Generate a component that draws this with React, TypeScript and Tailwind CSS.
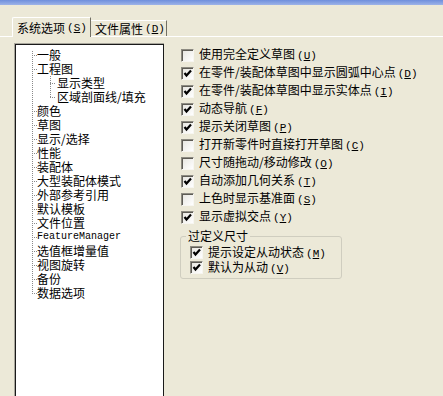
import React from 'react'

const treeItems: [string, number][] = [
    ['一般', 0],
    ['工程图', 0],
    ['显示类型', 1],
    ['区域剖面线/填充', 1],
    ['颜色', 0],
    ['草图', 0],
    ['显示/选择', 0],
    ['性能', 0],
    ['装配体', 0],
    ['大型装配体模式', 0],
    ['外部参考引用', 0],
    ['默认模板', 0],
    ['文件位置', 0],
    ['FeatureManager', 0],
    ['选值框增量值', 0],
    ['视图旋转', 0],
    ['备份', 0],
    ['数据选项', 0],
]

const options: [string, string, boolean][] = [
    ['使用完全定义草图', 'U', false],
    ['在零件/装配体草图中显示圆弧中心点', 'D', true],
    ['在零件/装配体草图中显示实体点', 'I', true],
    ['动态导航', 'F', true],
    ['提示关闭草图', 'P', true],
    ['打开新零件时直接打开草图', 'C', false],
    ['尺寸随拖动/移动修改', 'O', false],
    ['自动添加几何关系', 'T', true],
    ['上色时显示基准面', 'S', false],
    ['显示虚拟交点', 'Y', true],
]

const overDefined: [string, string, boolean][] = [
    ['提示设定从动状态', 'M', true],
    ['默认为从动', 'V', true],
]

function Key({ k }: { k: string }) {
    return (
        <span className="ml-[2px] font-['Liberation_Mono',monospace] text-[11px]">
            (<span className="underline">{k}</span>)
        </span>
    )
}

function CheckBox({ checked }: { checked: boolean }) {
    return (
        <span className="flex h-[13px] w-[13px] shrink-0 items-center justify-center border border-t-[#8d8b82] border-l-[#8d8b82] border-b-[#f7f6f1] border-r-[#f7f6f1] bg-gradient-to-br from-[#e6e5df] to-white shadow-[inset_1px_1px_0_#5e5c55]">
            {checked && (
                <svg width="9" height="9" viewBox="0 0 9 9">
                    <polyline points="1.5,4 3.5,6.5 8,1.5" fill="none" stroke="#000" strokeWidth="2.2" />
                </svg>
            )}
        </span>
    )
}

function OptionRow({ label, k, checked, h }: { label: string; k: string; checked: boolean; h: string }) {
    return (
        <div className={`flex items-center ${h}`}>
            <CheckBox checked={checked} />
            <span className="ml-[5px] whitespace-nowrap">
                {label}
                <Key k={k} />
            </span>
        </div>
    )
}

function TreeLines() {
    const dots: React.ReactNode[] = []
    const cy = (i: number) => 10 + 14 * i
    // root vertical
    for (let y = cy(0) - 4; y <= cy(17); y += 2) dots.push(<rect key={`rv${y}`} x={16} y={y} width={1} height={1} />)
    // child vertical
    for (let y = cy(1) + 7; y <= cy(3); y += 2) dots.push(<rect key={`cv${y}`} x={34} y={y} width={1} height={1} />)
    treeItems.forEach(([, lvl], i) => {
        const x0 = lvl === 0 ? 16 : 34
        for (let x = x0; x <= x0 + 5; x += 2) dots.push(<rect key={`h${i}-${x}`} x={x} y={cy(i)} width={1} height={1} />)
    })
    return (
        <svg className="pointer-events-none absolute left-0 top-0" width="147" height="360" fill="#8a8a8a">
            {dots}
        </svg>
    )
}

export default function App() {
    return (
        <div className="flex h-[396px] w-[443px] flex-col overflow-hidden bg-[#ECE9D8] font-['Noto_Sans_CJK_SC',sans-serif] text-[12px] leading-[14px] text-black">
            <div className="h-[5px] shrink-0 bg-gradient-to-b from-[#6f8fdc] to-[#9db3e8]" />
            <div className="mt-[12px] flex shrink-0 items-end border-b border-white pl-[12px]">
                <div className="relative z-10 -mb-px flex h-[20px] w-[79px] items-center rounded-tl-[2px] border-l border-t border-r border-l-white border-t-white border-r-[#716F64] bg-[#ECE9D8] pl-[4px] whitespace-nowrap">
                    系统选项<Key k="S" />
                </div>
                <div className="flex h-[16px] w-[76px] items-center border-t border-r border-t-white border-r-[#716F64] pl-[4px] whitespace-nowrap">
                    文件属性<Key k="D" />
                </div>
            </div>
            <div className="flex min-h-0 flex-1">
                <div className="ml-[14px] mt-[6px] w-[150px] shrink-0 border-l border-t border-[#a8a69c]">
                    <div className="relative h-full border-l border-t border-r border-[#1a1a1a] bg-white pt-[3px]">
                        <TreeLines />
                        {treeItems.map(([label, lvl]) => (
                            <div
                                key={label}
                                className={`h-[14px] whitespace-nowrap ${lvl === 0 ? 'pl-[21px]' : 'pl-[41px]'} ${label === 'FeatureManager' ? "font-['Liberation_Mono',monospace] text-[10px]" : ''}`}
                            >
                                {label}
                            </div>
                        ))}
                    </div>
                </div>
                <div className="flex-1 pl-[17px] pt-[9px]">
                    {options.map(([label, k, checked]) => (
                        <OptionRow key={label} label={label} k={k} checked={checked} h="h-[18px]" />
                    ))}
                    <fieldset className="-ml-px mt-[3px] w-[162px] rounded-[3px] border border-[#cfcdbf] pb-[3px] pl-[9px]">
                        <legend className="ml-[-4px] px-[2px]">过定义尺寸</legend>
                        <div className="pt-[2px]">
                            {overDefined.map(([label, k, checked]) => (
                                <OptionRow key={label} label={label} k={k} checked={checked} h="h-[15px]" />
                            ))}
                        </div>
                    </fieldset>
                </div>
            </div>
        </div>
    )
}
